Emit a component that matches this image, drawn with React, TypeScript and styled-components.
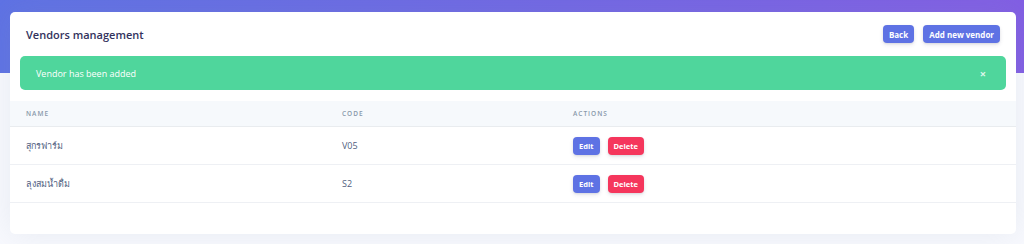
import styled, { createGlobalStyle } from "styled-components";

const GlobalStyle = createGlobalStyle`
	html, body {
		margin: 0;
		padding: 0;
		background: #f8f9fe;
	}
	body {
		font-family: "Open Sans", "Noto Sans", sans-serif;
		-webkit-font-smoothing: antialiased;
	}
`;

type Vendor = { name: string; code: string };

const vendors: Vendor[] = [
	{ name: "สุกรฟาร์ม", code: "V05" },
	{ name: "ลุงสมน้ำดื่ม", code: "S2" },
];

const App: React.FC = () => {
	return (
		<Page>
			<GlobalStyle />
			<Card>
				<CardHeader>
					<Title>Vendors management</Title>

					<HeaderButtons>
						<Button>Back</Button>
						<Button>Add new vendor</Button>
					</HeaderButtons>
				</CardHeader>

				<Alert>
					<span>Vendor has been added</span>
					<Close>×</Close>
				</Alert>

				<Table>
					<colgroup>
						<col width={316} />
						<col width={231} />
						<col />
					</colgroup>
					<thead>
						<tr>
							<Th>Name</Th>
							<Th>Code</Th>
							<Th>Actions</Th>
						</tr>
					</thead>
					<tbody>
						{vendors.map((v) => (
							<tr key={v.code}>
								<Td>{v.name}</Td>
								<Td>{v.code}</Td>
								<Td>
									<Actions>
										<SmallButton>Edit</SmallButton>
										<SmallButton $danger>Delete</SmallButton>
									</Actions>
								</Td>
							</tr>
						))}
					</tbody>
				</Table>
			</Card>
		</Page>
	);
};

const Page = styled.div`
	min-height: 244px;
	box-sizing: border-box;
	padding: 12px 8px 10px 10px;
	background: linear-gradient(87deg, #5e72e4 0, #825ee4 100%) top / 100% 73px no-repeat,
		#f8f9fe;
`;

const Card = styled.div`
	background: #fff;
	border-radius: 5px;
	box-shadow: 0 0 2rem 0 rgba(136, 152, 170, 0.15);
	padding-bottom: 31px;
	overflow: hidden;
`;

const CardHeader = styled.div`
	display: flex;
	justify-content: space-between;
	align-items: center;
	height: 44px;
	padding: 0 16px;
`;

const Title = styled.h3`
	margin: 0;
	font-size: 11px;
	font-weight: 600;
	color: #32325d;
`;

const HeaderButtons = styled.div`
	display: flex;
	gap: 9px;
`;

const Button = styled.button`
	height: 18px;
	padding: 0 6px;
	border: none;
	border-radius: 4px;
	background: #5e72e4;
	color: #fff;
	font-family: "Open Sans", sans-serif;
	font-size: 8px;
	font-weight: 700;
	box-shadow: 0 2px 4px rgba(50, 50, 93, 0.11), 0 1px 2px rgba(0, 0, 0, 0.08);
	cursor: pointer;
`;

const Alert = styled.div`
	display: flex;
	justify-content: space-between;
	align-items: center;
	height: 34px;
	margin: 0 10px 11px;
	padding: 0 16px;
	border-radius: 5px;
	background: #4fd69c;
	color: #fff;
	font-size: 9px;
	font-weight: 500;
`;

const Close = styled.span`
	font-size: 11px;
	font-weight: 700;
	opacity: 0.8;
	margin-right: 4px;
`;

const Table = styled.table`
	width: 100%;
	table-layout: fixed;
	border-collapse: collapse;
`;

const Th = styled.th`
	height: 25px;
	padding: 0 16px;
	text-align: left;
	background: #f6f9fc;
	color: #8898aa;
	font-size: 6.5px;
	font-weight: 600;
	letter-spacing: 1px;
	text-transform: uppercase;
	border-bottom: 1px solid #e9ecef;
`;

const Td = styled.td`
	height: 37px;
	padding: 0 16px;
	color: #525f7f;
	font-size: 9px;
	border-bottom: 1px solid #eef0f4;
`;

const Actions = styled.div`
	display: flex;
	gap: 8px;
`;

const SmallButton = styled.button<{ $danger?: boolean }>`
	height: 18px;
	padding: 0 6px;
	border: none;
	border-radius: 4px;
	background: ${(p) => (p.$danger ? "#f5365c" : "#5e72e4")};
	color: #fff;
	font-family: "Open Sans", sans-serif;
	font-size: 7.5px;
	font-weight: 700;
	box-shadow: 0 2px 4px rgba(50, 50, 93, 0.11), 0 1px 2px rgba(0, 0, 0, 0.08);
	cursor: pointer;
`;

export default App;
